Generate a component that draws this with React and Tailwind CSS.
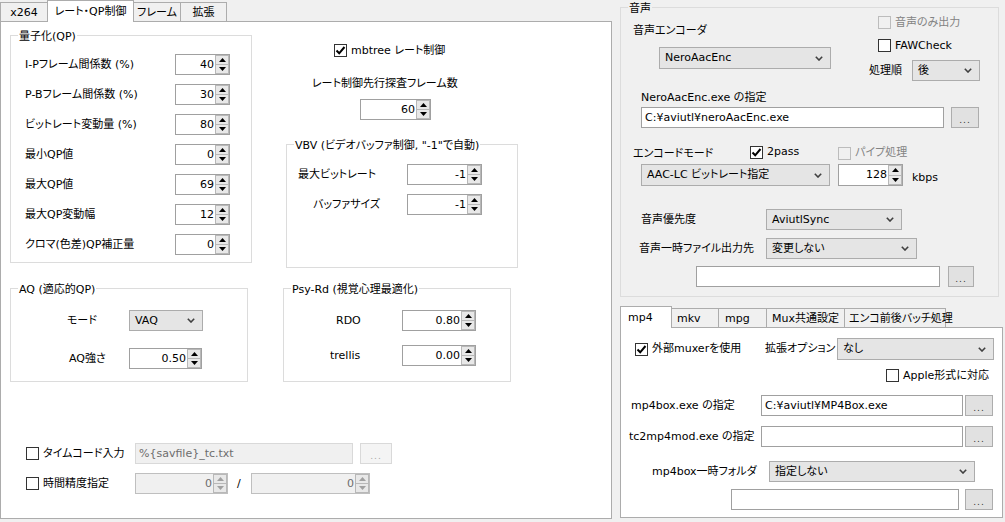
import React from "react";

// スピンボタンの三角
const Tri = ({ down, disabled }) => (
  <svg width="7" height="4" viewBox="0 0 7 4">
    <polygon
      points={down ? "0,0 7,0 3.5,4" : "0,4 7,4 3.5,0"}
      fill={disabled ? "#a0a0a0" : "#000"}
    />
  </svg>
);

// コンボボックスの矢印
const Chevron = () => (
  <svg width="8" height="5" viewBox="0 0 8 5">
    <path d="M0.8 0.8 L4 4 L7.2 0.8" stroke="#404040" strokeWidth="1.6" fill="none" />
  </svg>
);

const Spin = ({ value, className = "", disabled = false, tall = false }) => (
  <div
    className={`flex border ${tall ? "h-[22px]" : "h-[21px]"} ${
      disabled ? "border-[#bfbfbf] bg-[#f0f0f0] text-[#6d6d6d]" : "border-[#a0a0a0] bg-white text-black"
    } ${className}`}
  >
    <div className="flex-1 flex items-center justify-end pr-[1px]">{value}</div>
    <div className="flex flex-col w-[14px]">
      <div className="flex-1 flex items-center justify-center border border-[#b8b8b8] bg-[#e8e8e8]">
        <Tri disabled={disabled} />
      </div>
      <div className="flex-1 flex items-center justify-center border border-t-0 border-[#b8b8b8] bg-[#e8e8e8]">
        <Tri down disabled={disabled} />
      </div>
    </div>
  </div>
);

const Combo = ({ value, className = "", tall = false }) => (
  <div
    className={`flex items-center border border-[#acacac] bg-[#e5e5e5] pl-[5px] pr-[7px] ${
      tall ? "h-[22px]" : "h-[21px]"
    } ${className}`}
  >
    <span className="flex-1 whitespace-nowrap">{value}</span>
    <Chevron />
  </div>
);

const Check = ({ label, checked = false, disabled = false, className = "" }) => (
  <div className={`flex items-center ${className}`}>
    <div
      className={`w-[13px] h-[13px] shrink-0 border flex items-center justify-center ${
        disabled ? "border-[#bcbcbc] bg-[#f0f0f0]" : "border-[#333333] bg-white"
      }`}
    >
      {checked && (
        <svg width="11" height="11" viewBox="0 0 11 11">
          <path d="M1.5 5.5 L4.2 8.3 L9.5 2" stroke="#000" strokeWidth="2" fill="none" />
        </svg>
      )}
    </div>
    <span className={`ml-[4px] whitespace-nowrap ${disabled ? "text-[#838383]" : ""}`}>{label}</span>
  </div>
);

const Btn = ({ className = "", disabled = false }) => (
  <div
    className={`h-[21px] flex items-center justify-center border ${
      disabled ? "border-[#d9d9d9] bg-[#f4f4f4] text-[#a8a8a8]" : "border-[#adadad] bg-[#e1e1e1] text-[#333]"
    } ${className}`}
  >
    <span className="text-[9px] leading-[9px] pt-[6px] tracking-[1px]">...</span>
  </div>
);

const TextBox = ({ value = "", className = "", disabled = false }) => (
  <div
    className={`h-[21px] flex items-center px-[3px] border whitespace-nowrap overflow-hidden ${
      disabled ? "border-[#d9d9d9] bg-[#f0f0f0] text-[#6d6d6d]" : "border-[#a0a0a0] bg-white"
    } ${className}`}
  >
    {value}
  </div>
);

// グループボックス
const Group = ({ title, className = "", bg = "bg-white", children }) => (
  <div className={`relative border border-[#dcdcdc] ${className}`}>
    <span className={`absolute -top-[6px] left-[7px] px-[1px] leading-[14px] whitespace-nowrap ${bg}`}>{title}</span>
    {children}
  </div>
);

const Tab = ({ label, selected = false, className = "" }) => (
  <div
    className={`border border-b-0 border-[#acacac] whitespace-nowrap ${
      selected ? "relative z-10 h-[22px] bg-white pt-[4px]" : "h-[20px] bg-[#f0f0f0] pt-[3px]"
    } ${className}`}
  >
    {label}
  </div>
);

const qpRows = [
  ["I-Pフレーム間係数 (%)", "40"],
  ["P-Bフレーム間係数 (%)", "30"],
  ["ビットレート変動量 (%)", "80"],
  ["最小QP値", "0"],
  ["最大QP値", "69"],
  ["最大QP変動幅", "12"],
  ["クロマ(色差)QP補正量", "0"],
];

const App = () => {
  return (
    <div className="w-[1005px] h-[522px] bg-[#f0f0f0] flex overflow-hidden text-black text-[11px] leading-[14px] font-['DejaVu_Sans','Noto_Sans_CJK_JP',sans-serif] [font-feature-settings:'palt']">
      {/* 左側: x264 タブ */}
      <div className="w-[612px] flex flex-col">
        <div className="h-[22px] flex items-end">
          <Tab label="x264" className="w-[48px] text-center" />
          <Tab label="レート・QP制御" selected className="w-[87px] -ml-px text-center" />
          <Tab label="フレーム" className="w-[48px] -ml-px text-center" />
          <Tab label="拡張" className="w-[47px] -ml-px text-center" />
        </div>
        <div className="-mt-px h-[498px] border border-[#acacac] bg-white flex flex-col">
          <div className="flex h-[233px] mt-[13px]">
            <Group title="量子化(QP)" className="ml-[9px] w-[242px] h-[228px]">
              <div className="flex flex-col gap-[9px] mt-[18px]">
                {qpRows.map(([label, v]) => (
                  <div key={label} className="flex items-center h-[21px] pl-[14px]">
                    <span className="w-[150px] whitespace-nowrap">{label}</span>
                    <Spin value={v} className="w-[55px]" />
                  </div>
                ))}
              </div>
            </Group>

            <div className="ml-[34px] w-[232px] flex flex-col">
              <Check checked label="mbtree レート制御" className="mt-[9px] ml-[48px] h-[13px]" />
              <div className="mt-[20px] ml-[26px] h-[14px] whitespace-nowrap">レート制御先行探査フレーム数</div>
              <Spin value="60" className="mt-[8px] ml-[74px] w-[71px]" />
              <Group title={'VBV (ビデオバッファ制御, "-1"で自動)'} className="mt-[24px] w-[232px] h-[124px]">
                <div className="flex flex-col mt-[19px] gap-[9px]">
                  <div className="flex items-center h-[21px]">
                    <span className="w-[120px] pl-[11px]">最大ビットレート</span>
                    <Spin value="-1" className="w-[75px]" />
                  </div>
                  <div className="flex items-center h-[21px]">
                    <span className="w-[120px] pl-[26px]">バッファサイズ</span>
                    <Spin value="-1" className="w-[75px]" />
                  </div>
                </div>
              </Group>
            </div>
          </div>

          <div className="flex mt-[20px]">
            <Group title="AQ (適応的QP)" className="ml-[9px] w-[238px] h-[94px]">
              <div className="flex flex-col mt-[21px]">
                <div className="flex items-center h-[21px]">
                  <span className="w-[118px] pl-[56px]">モード</span>
                  <Combo value="VAQ" className="w-[74px]" />
                </div>
                <div className="flex items-center h-[21px] mt-[17px]">
                  <span className="w-[118px] pl-[58px]">AQ強さ</span>
                  <Spin value="0.50" className="w-[73px]" />
                </div>
              </div>
            </Group>
            <Group title="Psy-Rd (視覚心理最適化)" className="ml-[35px] w-[228px] h-[94px]">
              <div className="flex flex-col mt-[21px]">
                <div className="flex items-center h-[21px]">
                  <span className="w-[118px] pl-[52px]">RDO</span>
                  <Spin value="0.80" className="w-[74px]" />
                </div>
                <div className="flex items-center h-[21px] mt-[14px]">
                  <span className="w-[118px] pl-[46px]">trellis</span>
                  <Spin value="0.00" className="w-[74px]" />
                </div>
              </div>
            </Group>
          </div>

          <div className="flex items-center h-[21px] mt-[61px] pl-[25px]">
            <div className="w-[109px]">
              <Check label="タイムコード入力" />
            </div>
            <TextBox disabled value="%{savfile}_tc.txt" className="w-[218px]" />
            <Btn disabled className="ml-[7px] w-[32px]" />
          </div>
          <div className="flex items-center h-[21px] mt-[9px] pl-[25px]">
            <div className="w-[109px]">
              <Check label="時間精度指定" />
            </div>
            <Spin disabled value="0" className="w-[93px]" />
            <span className="ml-[9px] w-[14px]">/</span>
            <Spin disabled value="0" className="w-[119px]" />
          </div>
        </div>
      </div>

      {/* 右側: 音声 + mux */}
      <div className="w-[393px] flex flex-col">
        <Group title="音声" bg="bg-[#f0f0f0]" className="ml-[8px] mt-[7px] w-[379px] h-[290px] flex flex-col">
          <div className="flex h-[73px]">
            <div className="w-[257px] flex flex-col">
              <div className="mt-[16px] ml-[12px] h-[14px]">音声エンコーダ</div>
              <Combo tall value="NeroAacEnc" className="mt-[9px] ml-[38px] w-[172px]" />
            </div>
            <div className="flex flex-col">
              <Check disabled label="音声のみ出力" className="mt-[8px] h-[13px]" />
              <Check label="FAWCheck" className="mt-[10px] h-[13px]" />
              <div className="mt-[8px] -ml-[9px] flex items-center">
                <span className="w-[43px]">処理順</span>
                <Combo value="後" className="w-[68px]" />
              </div>
            </div>
          </div>
          <div className="mt-[10px] ml-[20px] h-[14px]">NeroAacEnc.exe の指定</div>
          <div className="mt-[2px] ml-[20px] flex">
            <TextBox value="C:¥aviutl¥neroAacEnc.exe" className="w-[303px]" />
            <Btn className="ml-[7px] w-[28px]" />
          </div>
          <div className="mt-[16px] h-[16px] flex items-start">
            <span className="w-[129px] pl-[12px] pt-[3px]">エンコードモード</span>
            <Check checked label="2pass" className="w-[88px] mt-[1px]" />
            <Check disabled label="パイプ処理" className="mt-[2px]" />
          </div>
          <div className="mt-[4px] ml-[20px] flex items-center h-[22px]">
            <Combo tall value="AAC-LC ビットレート指定" className="w-[189px]" />
            <Spin tall value="128" className="ml-[8px] w-[65px]" />
            <span className="ml-[9px] pt-[5px]">kbps</span>
          </div>
          <div className="mt-[23px] flex items-center h-[21px]">
            <span className="w-[145px] pl-[20px]">音声優先度</span>
            <Combo value="AviutlSync" className="w-[136px]" />
          </div>
          <div className="mt-[8px] flex items-center h-[21px]">
            <span className="w-[145px] pl-[18px]">音声一時ファイル出力先</span>
            <Combo value="変更しない" className="w-[151px]" />
          </div>
          <div className="mt-[7px] ml-[75px] flex">
            <TextBox className="w-[244px]" />
            <Btn className="ml-[8px] w-[26px]" />
          </div>
        </Group>

        <div className="mt-[9px] ml-[8px] h-[22px] flex items-end">
          <Tab label="mp4" selected className="w-[52px] pl-[7px]" />
          <Tab label="mkv" className="w-[48px] -ml-px pl-[5px]" />
          <Tab label="mpg" className="w-[49px] -ml-px pl-[6px]" />
          <Tab label="Mux共通設定" className="w-[79px] -ml-px pl-[5px]" />
          <Tab label="エンコ前後バッチ処理" className="w-[102px] -ml-px pl-[4px]" />
        </div>
        <div className="-mt-px ml-[8px] w-[383px] h-[191px] border border-[#acacac] bg-white flex flex-col">
          <div className="mt-[10px] flex items-center h-[22px]">
            <div className="w-[144px] pl-[14px]">
              <Check checked label="外部muxerを使用" />
            </div>
            <span className="w-[72px]">拡張オプション</span>
            <Combo tall value="なし" className="w-[157px]" />
          </div>
          <Check label="Apple形式に対応" className="mt-[9px] ml-[265px] h-[13px]" />
          <div className="mt-[13px] flex items-center h-[21px]">
            <span className="w-[140px] pl-[10px]">mp4box.exe の指定</span>
            <TextBox value="C:¥aviutl¥MP4Box.exe" className="w-[202px]" />
            <Btn className="ml-[2px] w-[28px]" />
          </div>
          <div className="mt-[10px] flex items-center h-[21px]">
            <span className="w-[140px] pl-[8px] whitespace-nowrap">tc2mp4mod.exe の指定</span>
            <TextBox className="w-[202px]" />
            <Btn className="ml-[2px] w-[28px]" />
          </div>
          <div className="mt-[14px] flex items-center h-[21px]">
            <span className="w-[148px] pl-[31px]">mp4box一時フォルダ</span>
            <Combo value="指定しない" className="w-[206px]" />
          </div>
          <div className="mt-[7px] ml-[110px] flex">
            <TextBox className="w-[228px]" />
            <Btn className="ml-[6px] w-[28px]" />
          </div>
        </div>
      </div>
    </div>
  );
};

export default App;
